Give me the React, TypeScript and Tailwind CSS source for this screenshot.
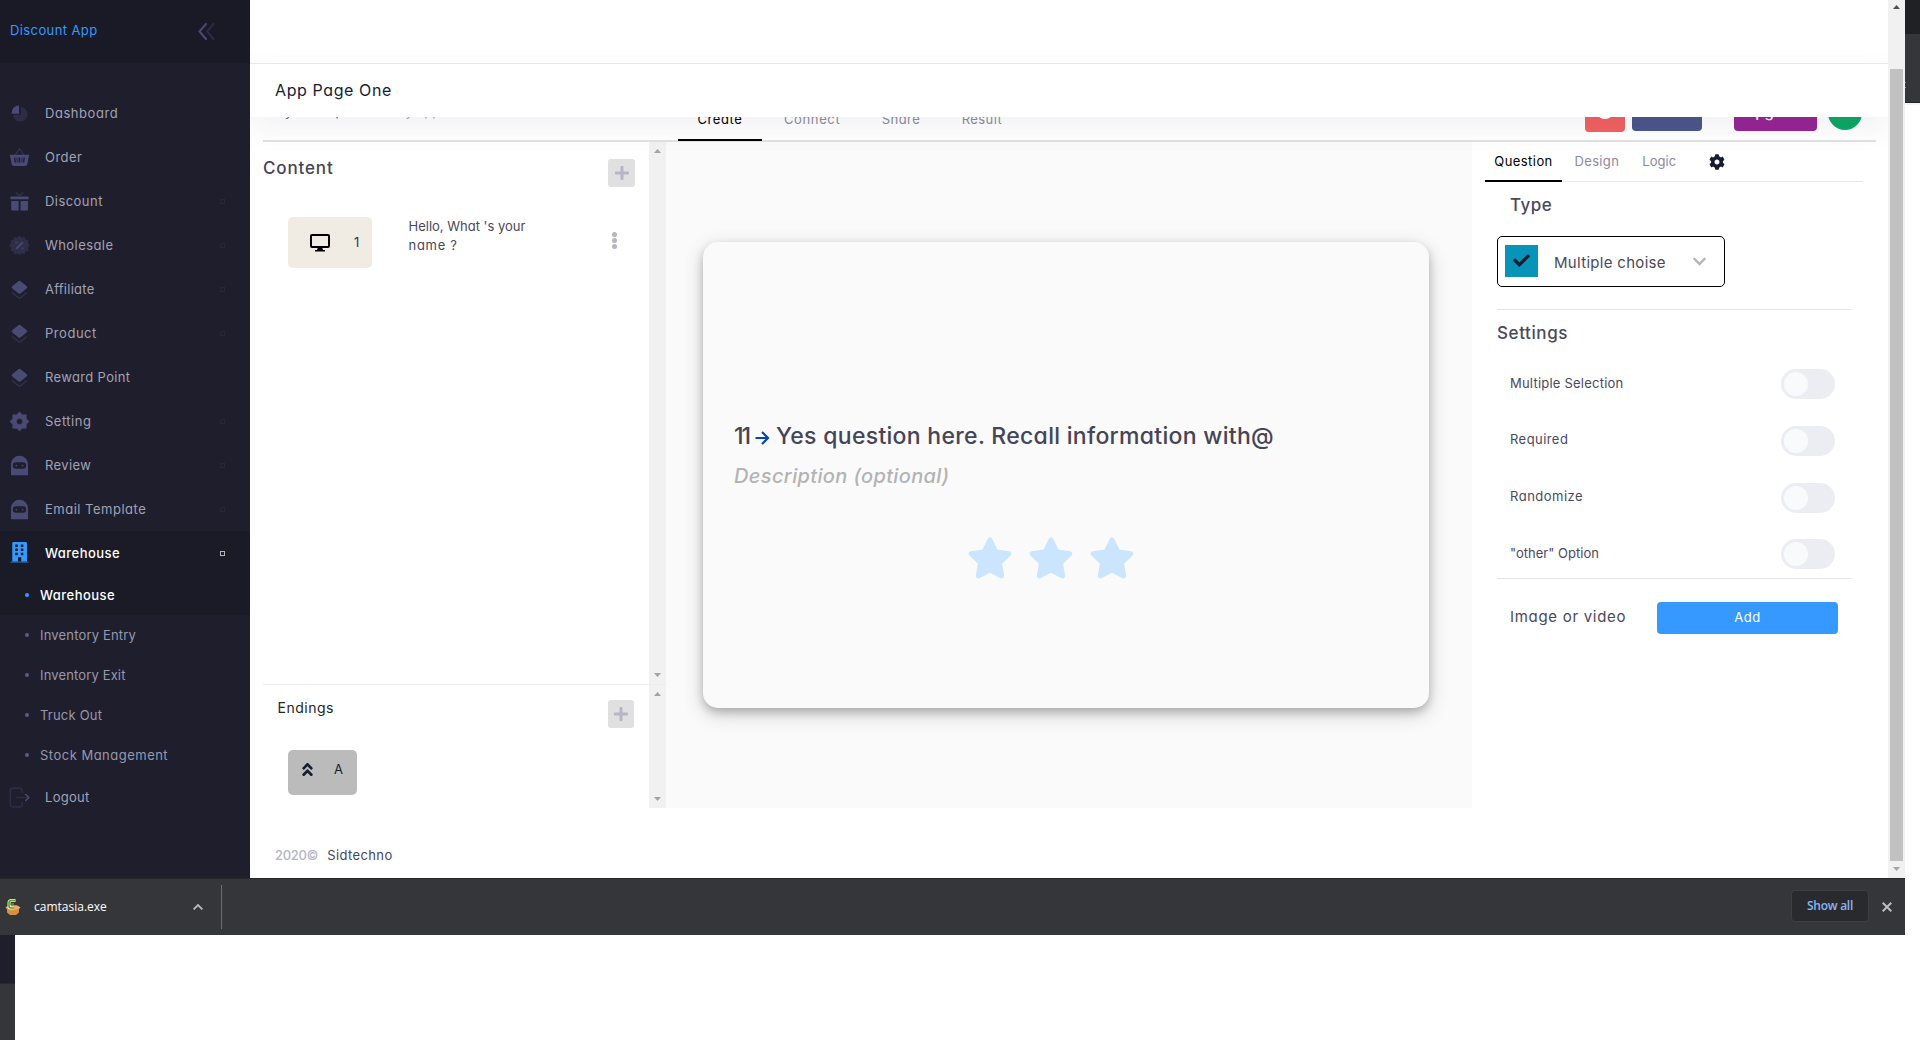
import type { ReactNode } from "react";
import { FaAngleDoubleUp, FaCheck, FaChevronDown, FaCog, FaPlus, FaStar } from "react-icons/fa";

const DIM = "#494b74";

function Icon({ children }: { children: ReactNode }) {
  return (
    <svg viewBox="-1.500 -1.500 27 27" className="size-[23px] shrink-0" fill={DIM}>
      {children}
    </svg>
  );
}

const PieIcon = () => (
  <Icon>
    <path opacity=".35" d="M13 3.500a8.700 8.700 0 1 1-9.500 9.500h8a1.500 1.500 0 0 0 1.500-1.500z" transform="translate(.6 .6)" />
    <path d="M11.500 2.200v10H2.700A9.300 9.300 0 0 1 11.500 2.200z" />
  </Icon>
);
const BasketIcon = () => (
  <Icon>
    <path d="M6.500 9.500 12 1.800l5.500 7.700" fill="none" stroke={DIM} strokeWidth="1.500" opacity=".45" />
    <path fillRule="evenodd" d="M1 8.800h22c.4 0 .7.4.5.8L22.800 11l-1.500 8.600A3 3 0 0 1 18.400 22H5.600a3 3 0 0 1-2.900-2.400L1.200 11 .5 9.600c-.2-.4.1-.8.5-.8zM5.500 12l.8 6h1.600l-.8-6zm5.300 0v6h2v-6zm6 0-.8 6h1.600l.8-6zM8.500 12l.3 6h1l-.3-6zm6 0-.3 6h1l.3-6z" />
  </Icon>
);
const GiftIcon = () => (
  <Icon>
    <path d="M7.500 1.500 12 5l4.500-3.500" fill="none" stroke={DIM} strokeWidth="1.700" opacity=".45" />
    <rect x="1.300" y="6" width="21.400" height="3.300" rx="0.600" />
    <path d="M2.300 11.500h8.700v11H3.500a1.200 1.200 0 0 1-1.200-1.200zM13.300 11.500H22v9.800a1.200 1.200 0 0 1-1.200 1.200h-7.500z" />
  </Icon>
);
const SaleIcon = () => (
  <Icon>
    <path
      opacity=".38"
      d="M12 .5 14.600 2.800 18 1.700l1 3.400 3.500.6-.7 3.500L24 12l-2.200 2.700.7 3.500-3.500.7-1 3.400-3.400-1.100L12 23.500l-2.600-2.300L6 22.300l-1-3.400-3.500-.7.7-3.500L0 12l2.200-2.800-.7-3.500L5 5.100l1-3.400 3.400 1.100z"
    />
    <path d="m15.200 7.300 1.500 1.400-7.900 8-1.500-1.400z" />
    <circle cx="8.500" cy="8.500" r="1.500" opacity=".5" />
    <circle cx="15.500" cy="15.500" r="1.500" opacity=".5" />
  </Icon>
);
const LayersIcon = () => (
  <svg viewBox="0 0 24 24" className="size-[23px] shrink-0" fill={DIM}>
    <path d="M12.934 16.072 19.360 10.956l.158-.125c.65-.514.76-1.457.245-2.107a1.500 1.500 0 0 0-.242-.243l-6.587-5.238a1.500 1.500 0 0 0-1.868 0L4.475 8.485a1.500 1.500 0 0 0-.001 2.347l6.592 5.241a1.500 1.500 0 0 0 1.868 0z" />
    <path d="m4.400 15.200 6.900 5.500a1.200 1.200 0 0 0 1.400 0l6.900-5.500" fill="none" stroke={DIM} strokeWidth="1.500" opacity=".4" />
  </svg>
);
const GearIcon = () => (
  <Icon>
    <path
      fillRule="evenodd"
      d="M12 .8 15.300 4H20v4.700L23.300 12 20 15.300V20h-4.700L12 23.200 8.700 20H4v-4.700L.7 12 4 8.700V4h4.700zM12 8.500a3.500 3.500 0 1 0 0 7 3.500 3.500 0 0 0 0-7z"
      stroke={DIM}
      strokeWidth=".6"
      strokeLinejoin="round"
    />
  </Icon>
);
const HelmetIcon = () => (
  <Icon>
    <path
      fillRule="evenodd"
      d="M2 23.500V10.500a10 9.800 0 0 1 20 0V23.500zM8 8.300a3.800 3.800 0 0 0 0 7.600h8a3.800 3.800 0 0 0 0-7.600z"
    />
    <circle cx="8.300" cy="12.100" r="1" />
    <circle cx="15.700" cy="12.100" r="1" />
  </Icon>
);
const BuildingIcon = () => (
  <svg viewBox="-1.500 -.7 27 27" className="size-[23px] shrink-0" fill="#3699ff">
    <path
      fillRule="evenodd"
      d="M5.200 0h13.600c1.200 0 2 .8 2 2v21H14v-5h-3.800v5H3.500V2c0-1.200.5-2 1.700-2zM7 3v3h3V3zm6.500 0v3h3V3zM7 7.800v3h3v-3zm6.500 0v3h3v-3zM7 12.600v3h3v-3zm6.500 0v3h3v-3z"
      transform="translate(0 -.8)"
    />
    <rect x="1.300" y="22" width="21.400" height="2" rx="1" opacity=".4" />
  </svg>
);
const LogoutIcon = () => (
  <Icon>
    <g fill="none" stroke={DIM} strokeWidth="1.800" strokeLinecap="round">
      <path d="M14.500 6V4a3 3 0 0 0-3-3H3.500a3 3 0 0 0-3 3v16a3 3 0 0 0 3 3h8a3 3 0 0 0 3-3v-2" opacity=".35" transform="translate(.7 0)" />
      <path d="M8 12h12" opacity=".35" />
      <path d="m19.300 8.500 3.600 3.500-3.600 3.500" />
    </g>
  </Icon>
);

type Item = { label: string; icon: ReactNode; track: string; arrow?: boolean };

const items: Item[] = [
  { label: "Dashboard", icon: <PieIcon />, track: "tracking-[0.55px]" },
  { label: "Order", icon: <BasketIcon />, track: "tracking-[0.45px]" },
  { label: "Discount", icon: <GiftIcon />, track: "tracking-[0.45px]", arrow: true },
  { label: "Wholesale", icon: <SaleIcon />, track: "tracking-[0.43px]", arrow: true },
  { label: "Affiliate", icon: <LayersIcon />, track: "tracking-[0.26px]", arrow: true },
  { label: "Product", icon: <LayersIcon />, track: "tracking-[0.54px]", arrow: true },
  { label: "Reward Point", icon: <LayersIcon />, track: "tracking-[0.34px]" },
  { label: "Setting", icon: <GearIcon />, track: "tracking-[0.5px]", arrow: true },
  { label: "Review", icon: <HelmetIcon />, track: "tracking-[0.38px]", arrow: true },
  { label: "Email Template", icon: <HelmetIcon />, track: "tracking-[0.5px]", arrow: true },
];

const subItems = [
  { label: "Inventory Entry", track: "tracking-[0.17px]" },
  { label: "Inventory Exit", track: "tracking-[0.14px]" },
  { label: "Truck Out", track: "tracking-[0.2px]" },
  { label: "Stock Management", track: "tracking-[0.49px]" },
];

function Sidebar() {
  return (
    <aside className="w-[250px] shrink-0 bg-[#1e1e2d] text-[13px] text-[#a2a3b7]">
      <div className="flex h-[63px] items-center justify-between bg-[#1a1a27] pl-[10px] pr-[35px]">
        <span className="-mt-[2px] tracking-[0.4px] text-[#3699ff]">Discount App</span>
        <svg viewBox="0 0 17 17" className="-mt-px size-[17px]" fill="none" strokeWidth="2" strokeLinecap="round">
          <path d="M8 1 1.500 8.500 8 16" stroke={DIM} />
          <path d="M15.500 1 9 8.500l6.500 7.500" stroke="#2b2b41" />
        </svg>
      </div>
      <nav className="pt-[28px]">
        {items.map((it) => (
          <div key={it.label} className="flex h-11 items-center gap-[14px] pl-2 pr-[25px]">
            {it.icon}
            <span className={`mt-px ${it.track}`}>{it.label}</span>
            {it.arrow && <i className="ml-auto size-[5px] border border-[#27273a]" />}
          </div>
        ))}
        <div className="bg-[#1b1b28] font-medium text-white">
          <div className="flex h-11 items-center gap-[14px] pl-2 pr-[25px]">
            <BuildingIcon />
            <span className="mt-px tracking-[0.46px]">Warehouse</span>
            <i className="ml-auto size-[5px] border border-[#b5b5b0]" />
          </div>
          <div className="flex h-10 items-center gap-[11px] pl-[25px]">
            <i className="size-1 rounded-full bg-[#3699ff]" />
            <span className="mt-px tracking-[0.46px]">Warehouse</span>
          </div>
        </div>
        {subItems.map((s) => (
          <div key={s.label} className="flex h-10 items-center gap-[11px] pl-[25px] text-[#9899ac]">
            <i className="size-1 rounded-full bg-[#5c5e81]" />
            <span className={`mt-px ${s.track}`}>{s.label}</span>
          </div>
        ))}
        <div className="flex h-11 items-center gap-[14px] pl-2">
          <LogoutIcon />
          <span className="mt-px tracking-[0.3px]">Logout</span>
        </div>
      </nav>
    </aside>
  );
}

function Arrow({ down = false, dark = false }: { down?: boolean; dark?: boolean }) {
  return (
    <svg viewBox="0 0 7 4" className="h-1 w-[7px]" fill={dark ? "#505050" : "#a3a3a3"}>
      <path d={down ? "M0 0h7L3.500 4z" : "M0 4h7L3.500 0z"} />
    </svg>
  );
}

function Scrollbar() {
  return (
    <div className="flex w-[17px] shrink-0 flex-col items-center justify-between bg-[#f1f1f1] py-[7px]">
      <Arrow />
      <Arrow down />
    </div>
  );
}

function TopNav() {
  return (
    <div className="flex h-[25px] items-end border-b-2 border-[#e1e1e1] text-[13px] text-[#8b8a9e]">
      <div className="flex h-[23px] w-[415px] overflow-hidden">
        <span className="-mt-[16px] ml-[10px] flex h-5 gap-[26px] leading-5 text-[#5b5b6e]">
          <span className="tracking-[0.3px]">My workspace</span>
          <span className="text-[#a0a0b0]">My app</span>
        </span>
      </div>
      <div className="-mb-px flex h-6">
        <div className="flex h-6 w-[84px] justify-center overflow-hidden border-b-2 border-black text-black">
          <span className="-mt-[8px] leading-5 tracking-[0.62px]">Create</span>
        </div>
        <div className="flex h-6 gap-[41.500px] overflow-hidden pl-[22px]">
          <span className="-mt-[8px] leading-5 tracking-[0.62px]">Connect</span>
          <span className="-mt-[8px] leading-5 tracking-[0.43px]">Share</span>
          <span className="-mt-[8px] leading-5 tracking-[0.43px]">Result</span>
        </div>
      </div>
      <div className="ml-auto mr-[14px] flex h-[23px] items-start overflow-hidden text-white">
        <div className="flex h-[15px] w-10 justify-center overflow-hidden rounded-b bg-[#f16060]">
          <i className="-mt-[10px] h-3 w-[14px] rounded-full bg-white" />
        </div>
        <div className="ml-[7px] flex h-[14px] w-[70px] justify-center overflow-hidden rounded-b bg-[#4a5589]">
          <span className="-mt-[14px] leading-4">Preview</span>
        </div>
        <div className="ml-8 flex h-[14px] w-[83px] justify-center overflow-hidden rounded-b bg-[#962392]">
          <span className="-mt-[14px] text-[15px] font-medium leading-[18px]">Upgrade</span>
        </div>
        <div className="ml-[11px] flex h-[13px] w-[34px] items-end overflow-hidden">
          <div className="flex size-[34px] shrink-0 justify-center rounded-full bg-[#0aa861]">
            <span className="mt-[4px] leading-5">T</span>
          </div>
        </div>
      </div>
    </div>
  );
}

function PlusButton({ className }: { className: string }) {
  return (
    <button className={`flex h-7 items-center justify-center rounded-[3px] bg-[#e0e0e0] text-[#b5b5c6] ${className}`}>
      <FaPlus className="size-4" />
    </button>
  );
}

function ContentPanel() {
  return (
    <section className="flex h-full w-[403px] shrink-0 flex-col">
      <div className="flex h-[542px]">
        <div className="flex-1">
          <div className="flex justify-between pr-[14px] pt-[17px]">
            <h2 className="-mt-[4px] h-6 text-[17px] font-medium leading-[26px] tracking-[0.85px] text-[#464457]">Content</h2>
            <PlusButton className="w-[27px]" />
          </div>
          <div className="mt-[30px] flex pl-[25px] pr-[32px]">
            <div className="flex h-[51px] w-[84px] items-center rounded-[5px] bg-[#f0ebe3] pl-[22px]">
              <svg viewBox="0 0 20 18" className="h-[18px] w-5" fill="none" stroke="#000">
                <rect x="1" y="1" width="18" height="12" rx="1" strokeWidth="2" />
                <path d="M8 13h4l1 3h2v1.500H5V16h2z" fill="#000" stroke="none" />
              </svg>
              <span className="ml-6 text-[13px] text-[#3a3248]">1</span>
            </div>
            <p className="ml-[36.500px] text-[13px] leading-[19px] text-[#4a485c]">
              Hello, What 's your
              <br />
              <span className="tracking-[0.7px]">name ?</span>
            </p>
            <div className="ml-auto mt-[15px] flex flex-col gap-[0.8px]">
              <i className="size-[5.200px] rounded-full bg-[#b5b5c3]" />
              <i className="size-[5.200px] rounded-full bg-[#b5b5c3]" />
              <i className="size-[5.200px] rounded-full bg-[#b5b5c3]" />
            </div>
          </div>
        </div>
        <Scrollbar />
      </div>
      <div className="flex flex-1 border-t border-[#ececec]">
        <div className="flex-1">
          <div className="flex justify-between pl-[14.500px] pr-[15px] pt-[15px]">
            <h3 className="-mt-[2px] text-[14px] leading-5 tracking-[0.5px] text-[#212529]">Endings</h3>
            <PlusButton className="w-[26px]" />
          </div>
          <div className="ml-[25px] mt-[22px] flex h-[45px] w-[69px] rounded-[5px] bg-[#bbbbbb] text-[#181c32]">
            <FaAngleDoubleUp className="ml-[11px] mt-[11px] size-[17px]" />
            <span className="ml-[18px] mt-[9px] text-[13px] leading-5">A</span>
          </div>
        </div>
        <Scrollbar />
      </div>
    </section>
  );
}

function Canvas() {
  return (
    <section className="h-full w-[806px] shrink-0 bg-[#fafafa] pl-[37px] pt-[100px]">
      <div className="h-[466px] w-[726px] rounded-[15px] bg-[#fafafa] pl-[31px] pt-[178px] shadow-[0_4px_8px_0_rgba(0,0,0,0.2),0_6px_20px_0_rgba(0,0,0,0.19)]">
        <div className="flex h-8 items-center text-[23px] font-medium text-[#464457]">
          <span className="w-[21px] tracking-[-2px]">11</span>
          <svg viewBox="0 0 14 14" className="mr-[6px] mt-[3px] h-[14px] w-[15px]" fill="none" stroke="#0445af" strokeWidth="2.200">
            <path d="M0 7h12M6.500 1l6 6-6 6" />
          </svg>
          <span className="whitespace-nowrap tracking-[0.3px]">Yes question here. Recall information with@</span>
        </div>
        <p className="mt-[9px] text-[20px] font-medium italic leading-[30px] tracking-[0.36px] text-[#b3b3b3]">Description (optional)</p>
        <div className="mt-[44px] flex gap-[15px] pl-[233px] text-[#cce5ff]">
          <FaStar className="h-[46px] w-[46px]" />
          <FaStar className="h-[46px] w-[46px]" />
          <FaStar className="h-[46px] w-[46px]" />
        </div>
      </div>
    </section>
  );
}

const toggles = [
  { label: "Multiple Selection", track: "tracking-[0.22px]", h: "h-[57px]", top: "mt-[4px]" },
  { label: "Required", track: "tracking-[0.44px]", h: "h-[57px]", top: "mt-[3px]" },
  { label: "Randomize", track: "tracking-[0.5px]", h: "h-[56px]", top: "mt-[3px]" },
  { label: '"other" Option', track: "tracking-[0.03px]", h: "h-[39px]", top: "mt-[4px]" },
];

function SettingsPanel() {
  return (
    <section className="h-full w-[391px] shrink-0 pl-[13px] text-[13px] text-[#4a485c]">
      <div className="flex h-10 w-[378px] border-b border-[#e8e8ed] text-[#8b8a9e]">
        <div className="flex h-10 w-[77px] justify-center border-b-2 border-black text-black">
          <span className="mt-[9px] leading-5 tracking-[0.44px]">Question</span>
        </div>
        <span className="ml-[12.500px] mt-[9px] leading-5 tracking-[0.35px]">Design</span>
        <span className="ml-[23px] mt-[9px] leading-5 tracking-[0.05px]">Logic</span>
        <FaCog className="ml-[32.500px] mt-[12px] size-4 text-[#181c32]" />
      </div>
      <div className="w-[366px] pl-3">
        <h2 className="mt-[10px] pl-[13px] text-[17px] font-medium leading-[26px] tracking-[0.5px]">Type</h2>
        <div className="mt-[18px] flex h-[51px] w-[228px] items-center rounded-[5px] border border-black pl-[7px] pr-[17px]">
          <div className="-mt-[2px] flex h-8 w-[33px] items-center justify-center bg-[#0893b8]">
            <FaCheck className="-mt-px size-[17px] text-[#181c32]" />
          </div>
          <span className="ml-[16px] mt-[3px] text-[15px] tracking-[0.3px]">Multiple choise</span>
          <FaChevronDown className="ml-auto size-[15px] text-[#b5b5c3]" />
        </div>
        <hr className="mt-[22px] border-[#e4e4e4]" />
        <h2 className="mt-[10px] text-[17px] font-medium leading-[26px] tracking-[0.6px]">Settings</h2>
        <div className="mt-[23px]">
          {toggles.map((t) => (
            <div key={t.label} className={`flex items-start justify-between pl-[13px] pr-4 ${t.h}`}>
              <span className={`leading-5 ${t.top} ${t.track}`}>{t.label}</span>
              <span className="h-[30px] w-[54px] rounded-full bg-[#ebedf3] p-[3px]">
                <i className="block size-6 rounded-full bg-[#f9fafc]" />
              </span>
            </div>
          ))}
        </div>
        <hr className="border-[#e4e4e4]" />
        <div className="mt-[23px] flex items-center justify-between pl-[13px] pr-[13px]">
          <span className="-mt-[2px] text-[15px] tracking-[0.7px]">Image or video</span>
          <button className="h-8 w-[181px] rounded bg-[#3699ff] text-[13px] tracking-[0.5px] text-white">Add</button>
        </div>
      </div>
    </section>
  );
}

function DownloadBar() {
  return (
    <div className="flex h-[57px] w-[1905px] items-center border-t border-[#28292c] bg-[#35363a] pl-[5px] pr-[13px]">
      <svg viewBox="0 0 16 16" className="-mt-px size-4">
        <path d="M.5 8.500 4 6.500h8l3.500 2-1.500 1.500v3.500L11 16H5l-3-2.500V10z" fill="#d98e45" />
        <path d="M.5 8.500 5 11l3-1 3 1 4.500-2.500L12 6.500H4z" fill="#f0ab68" />
        <path d="M10.500 1.500H6A2.500 2.500 0 0 0 4 4v3a2 2 0 0 0 2 2h3" fill="none" stroke="#e8f3df" strokeWidth="3" />
        <path d="M10.500 1.500H6A2.500 2.500 0 0 0 4 4v3a2 2 0 0 0 2 2h3M6 5h3" fill="none" stroke="#55a315" strokeWidth="1.600" />
      </svg>
      <span className="ml-[13px] w-[159px] font-['Open_Sans'] text-[12px] text-white">camtasia.exe</span>
      <svg viewBox="0 0 10 6" className="h-[6px] w-[10px]" fill="none" stroke="#b9babc" strokeWidth="1.800">
        <path d="M.6 5.400 5 1l4.400 4.400" />
      </svg>
      <i className="ml-[18px] h-11 w-px bg-[#6c6d70]" />
      <button className="-mt-[2px] ml-auto h-8 w-[78px] rounded border border-[#3e3f43] bg-[#292a2d] font-['Open_Sans'] text-[12px] font-semibold tracking-[-0.25px] text-[#8ab4f8]">
        Show all
      </button>
      <svg viewBox="0 0 10 10" className="-mt-px ml-[13px] size-[10px]" fill="none" stroke="#bcbdbf" strokeWidth="2">
        <path d="m.7.7 8.600 8.600M9.300.7.7 9.300" />
      </svg>
    </div>
  );
}

export default function App() {
  return (
    <div className="flex h-[1040px] w-[1920px] flex-col overflow-hidden bg-white font-['Inter',sans-serif] [font-feature-settings:'cv11']">
      <div className="flex h-[935px]">
        <div className="flex w-[1905px] flex-col">
          <div className="flex h-[878px]">
            <Sidebar />
            <main className="flex w-[1638px] flex-col overflow-hidden">
              <div className="h-16 shrink-0 border-b border-[#ebebee]" />
              <div className="relative z-10 flex h-[53px] shrink-0 items-center bg-white pb-[2px] pl-[25px] text-[16px] tracking-[0.6px] text-[#181c32] shadow-[0_10px_30px_0_rgba(82,63,105,0.08)]">
                App Page One
              </div>
              <div className="ml-[13px] w-[1613px]">
                <TopNav />
                <div className="flex h-[666px]">
                  <ContentPanel />
                  <Canvas />
                  <SettingsPanel />
                </div>
              </div>
              <footer className="mt-[37px] flex gap-[9px] pl-[25px] text-[13px] leading-5">
                <span className="font-medium tracking-[-0.3px] text-[#b5b5c3]">2020©</span>
                <span className="tracking-[0.38px] text-[#464457]">Sidtechno</span>
              </footer>
            </main>
            <div className="flex w-[17px] flex-col items-center bg-[#f1f1f1] pt-[5px]">
              <Arrow dark />
              <div className="mt-[60px] h-[792px] w-[13px] bg-[#c1c1c1]" />
              <div className="mt-[6px] flex">
                <Arrow down />
              </div>
            </div>
          </div>
          <DownloadBar />
        </div>
        <div className="w-[15px]">
          <div className="h-[34px] bg-[#202124]" />
          <div className="flex h-[69px] flex-col gap-1 border-b border-[#232427] bg-[#35363a] pt-[48px]">
            <i className="size-px bg-[#c08552]" />
            <i className="size-px bg-[#c08552]" />
          </div>
          <div className="h-[2px] bg-[#f3f3f3]" />
        </div>
      </div>
      <div className="w-[15px]">
        <div className="h-12 bg-[#1e1e2d]" />
        <div className="h-[57px] border-t border-[#28292c] bg-[#35363a]" />
      </div>
    </div>
  );
}
